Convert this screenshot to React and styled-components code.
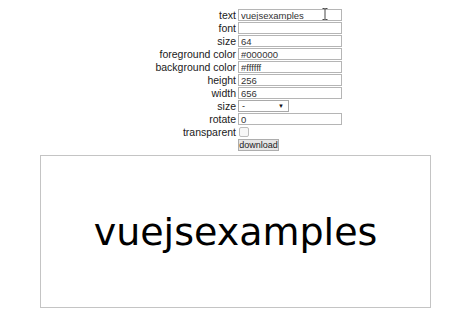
import React from 'react';
import styled, { createGlobalStyle } from 'styled-components';

const GlobalStyle = createGlobalStyle`
  html, body {
    margin: 0;
    padding: 0;
    background: #ffffff;
  }
  body {
    font-family: 'Liberation Sans', Arial, sans-serif;
    color: #222;
  }
`;

const Page = styled.div`
  width: 474px;
  padding-top: 9px;
  display: flex;
  flex-direction: column;
  align-items: center;
`;

const Form = styled.div`
  width: 100%;
  display: grid;
  grid-template-columns: 1fr 1fr;
  grid-auto-rows: 12px;
  column-gap: 2px;
  row-gap: 1px;
`;

const Label = styled.label`
  justify-self: end;
  align-self: center;
  font-size: 10.5px;
  line-height: 12px;
  color: #1a1a1a;
  white-space: nowrap;
`;

const Field = styled.div`
  position: relative;
  display: flex;
  align-items: center;
`;

const TextInput = styled.input`
  box-sizing: border-box;
  width: 104px;
  height: 12px;
  margin: 0;
  padding: 0 2px;
  border: 1px solid #b5b5b5;
  font-family: 'Liberation Sans', Arial, sans-serif;
  font-size: 9.5px;
  color: #333;
  outline: none;
`;

const Select = styled.div`
  box-sizing: border-box;
  width: 51px;
  height: 12px;
  border: 1px solid #a9a9a9;
  display: flex;
  align-items: center;
  justify-content: space-between;
  padding: 0 4px 0 3px;
  font-size: 9px;
  color: #222;
  background: #fff;
`;

const Arrow = styled.span`
  font-size: 6px;
  color: #111;
`;

const Check = styled.span`
  box-sizing: border-box;
  width: 10px;
  height: 10px;
  margin-left: 1px;
  border: 1px solid #bdbdbd;
  border-radius: 2px;
  background: #f7f7f7;
`;

const Button = styled.button`
  box-sizing: border-box;
  height: 12px;
  width: 41px;
  margin: 0;
  padding: 0;
  border: 1px solid #adadad;
  background: #e6e6e6;
  font-family: 'Liberation Sans', Arial, sans-serif;
  font-size: 9px;
  line-height: 10px;
  color: #222;
  text-align: center;
  white-space: nowrap;
`;

const Cursor = styled.svg`
  position: absolute;
  left: 84px;
  top: -1px;
`;

const Canvas = styled.div`
  box-sizing: border-box;
  margin-top: 4px;
  margin-right: 3px;
  width: 391px;
  height: 153px;
  border: 1px solid #c4c4c4;
  display: flex;
  align-items: center;
  justify-content: center;
  font-family: 'DejaVu Sans', Verdana, sans-serif;
  font-size: 38px;
  color: #000;
  background: #fff;
`;

const fields = [
  ['text', 'vuejsexamples'],
  ['font', ''],
  ['size', '64'],
  ['foreground color', '#000000'],
  ['background color', '#ffffff'],
  ['height', '256'],
  ['width', '656'],
];

export default function App() {
  return (
    <Page>
      <GlobalStyle />
      <Form>
        {fields.map(([label, value], i) => (
          <React.Fragment key={label}>
            <Label>{label}</Label>
            <Field>
              <TextInput defaultValue={value} />
              {i === 0 && (
                <Cursor width="6" height="12" viewBox="0 0 6 12">
                  <path d="M0.5 0.5h2l0.5 0.5 0.5-0.5h2M3 1v10M0.5 11.5h2l0.5-0.5 0.5 0.5h2" stroke="#333" strokeWidth="0.9" fill="none" />
                </Cursor>
              )}
            </Field>
          </React.Fragment>
        ))}
        <Label>size</Label>
        <Field>
          <Select>
            <span>-</span>
            <Arrow>▼</Arrow>
          </Select>
        </Field>
        <Label>rotate</Label>
        <Field>
          <TextInput defaultValue="0" />
        </Field>
        <Label>transparent</Label>
        <Field>
          <Check />
        </Field>
        <span />
        <Field>
          <Button>download</Button>
        </Field>
      </Form>
      <Canvas>vuejsexamples</Canvas>
    </Page>
  );
}
